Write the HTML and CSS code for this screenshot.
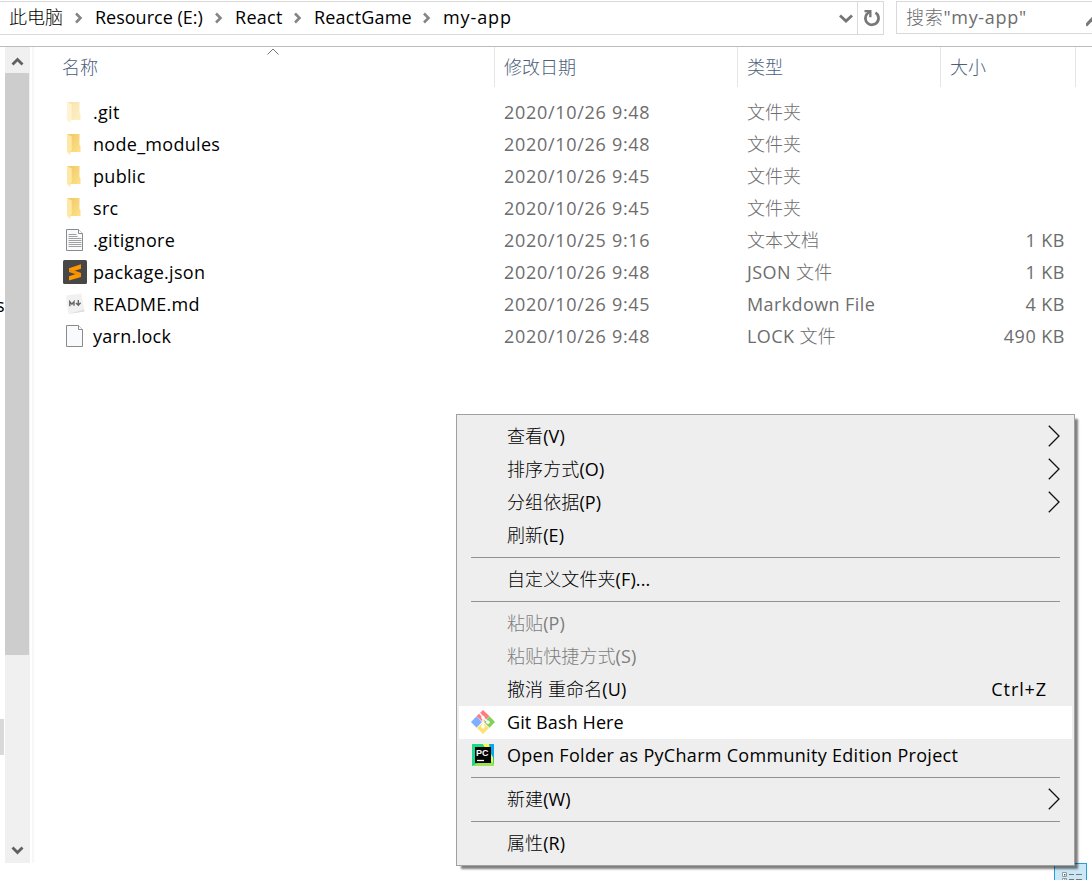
FILE: index.html
```html
<!doctype html>
<html lang="zh-CN">

<head>
  <meta charset="UTF-8" />
  <meta name="viewport" content="width=device-width, initial-scale=1.0" />
  <title>my-app</title>
  <link rel="stylesheet" href="styles.css">
</head>

<body>
  <div class="window">
    <header class="toolbar">
      <div class="address">
        <nav class="crumbs">
          <span class="crumb w-pc">此电脑</span>
          <svg class="crumb-arrow" viewBox="0 0 8 12"><path d="M1 1.5 5.5 6 1 10.5" /></svg>
          <span class="crumb w-drive">Resource (E:)</span>
          <svg class="crumb-arrow" viewBox="0 0 8 12"><path d="M1 1.5 5.5 6 1 10.5" /></svg>
          <span class="crumb w-react">React</span>
          <svg class="crumb-arrow" viewBox="0 0 8 12"><path d="M1 1.5 5.5 6 1 10.5" /></svg>
          <span class="crumb w-game">ReactGame</span>
          <svg class="crumb-arrow" viewBox="0 0 8 12"><path d="M1 1.5 5.5 6 1 10.5" /></svg>
          <span class="crumb current">my-app</span>
        </nav>
        <svg class="address-drop" viewBox="0 0 14 9"><path d="M1 1.5 7 7 13 1.5" /></svg>
        <button class="refresh" type="button">
          <svg viewBox="0 0 18 18"><path d="M12.5 3.6A6.600 6.600 0 1 1 4.200 4.600" /><path class="solid" d="M1.500 1H8.500v7.200H6.200V4.600L4.200 6.600 2.500 5 4.200 3.300H1.500z" /></svg>
        </button>
      </div>
      <div class="search">
        <span class="search-text">搜索"my-app"</span>
        <svg class="search-icon" viewBox="0 0 6 18"><path d="M0 16.500 7 9" /></svg>
      </div>
    </header>

    <main class="content">
      <aside class="tree"><span class="tree-text">s</span><span class="tree-item"></span></aside>
      <div class="scrollbar">
        <svg class="scroll-arrow" viewBox="0 0 25 26"><path d="M7.500 17.500 12.500 12.500 17.500 17.500" /></svg>
        <div class="thumb"></div>
        <svg class="scroll-arrow scroll-down" viewBox="0 0 25 26"><path d="M7.500 10.500 12.500 15.500 17.500 10.500" /></svg>
      </div>
      <div class="splitter"></div>

      <section class="files">
        <div class="row head">
          <span class="name">名称<svg class="sort" viewBox="0 0 12 7"><path d="M.5 6.500 6 1 11.500 6.500" /></svg></span>
          <span>修改日期</span><span>类型</span><span>大小</span>
        </div>
        <div class="row">
          <span class="name"><svg class="icon hidden-folder" viewBox="0 0 24 24"><use href="#folder" /></svg>.git</span>
          <span class="date">2020/10/26 9:48</span><span class="type">文件夹</span><span class="size"></span>
        </div>
        <div class="row">
          <span class="name"><svg class="icon" viewBox="0 0 24 24"><use href="#folder" /></svg>node_modules</span>
          <span class="date">2020/10/26 9:48</span><span class="type">文件夹</span><span class="size"></span>
        </div>
        <div class="row">
          <span class="name"><svg class="icon" viewBox="0 0 24 24"><use href="#folder" /></svg>public</span>
          <span class="date">2020/10/26 9:45</span><span class="type">文件夹</span><span class="size"></span>
        </div>
        <div class="row">
          <span class="name"><svg class="icon" viewBox="0 0 24 24"><use href="#folder" /></svg>src</span>
          <span class="date">2020/10/26 9:45</span><span class="type">文件夹</span><span class="size"></span>
        </div>
        <div class="row">
          <span class="name"><svg class="icon" viewBox="0 0 24 24"><use href="#page" /><path d="M5.500 6.500h8M5.500 8.500h9M5.500 10.500h13M5.500 12.500h13M5.500 14.500h13M5.500 16.500h13M5.500 18.500h13" stroke="#a0a0a0" /></svg>.gitignore</span>
          <span class="date">2020/10/25 9:16</span><span class="type">文本文档</span><span class="size">1 KB</span>
        </div>
        <div class="row">
          <span class="name"><svg class="icon" viewBox="0 0 24 24"><rect width="24" height="24" rx="1.500" fill="#474747" /><path d="M6 8.300 18 4.300v4.400l-6.600 2.100L18 12.900v4L6 20.500v-4.200l6.800-2.200L6 12z" fill="#ff9800" /><path d="M6 12V8.300l12 4.600v4z" fill="#f08a00" opacity=".45" /></svg>package.json</span>
          <span class="date">2020/10/26 9:48</span><span class="type latin">JSON 文件</span><span class="size">1 KB</span>
        </div>
        <div class="row">
          <span class="name"><svg class="icon" viewBox="0 0 24 24"><path d="M3 3.500 18.500 1.500 21.500 19.500 5.500 22z" fill="#f1f1f1" /><path d="M5.500 22 21.500 19.500l-.3-2z" fill="#dedede" /><path d="M6.800 14.200V9.700l2.100 2.400 2.100-2.400v4.100M15.300 8v5M13 11l2.300 2.300 2.300-2.500" fill="none" stroke="#666" stroke-width="1.400" /></svg>README.md</span>
          <span class="date">2020/10/26 9:45</span><span class="type latin">Markdown File</span><span class="size">4 KB</span>
        </div>
        <div class="row">
          <span class="name"><svg class="icon" viewBox="0 0 24 24"><use href="#page" /></svg>yarn.lock</span>
          <span class="date">2020/10/26 9:48</span><span class="type latin">LOCK 文件</span><span class="size">490 KB</span>
        </div>
      </section>
    </main>

    <div class="view-toggle">
      <svg viewBox="0 0 31 17"><path d="M7.500 8.500h4v4h-4zM7.500 14.500h4v4h-4z" fill="#fff" stroke="#999" /><path d="M9 10h1.500v1.500H9zM9 15.500h1.500V17H9z" fill="#386e78" /><path d="M14 10.500h5M21 10.500h6M14 15.500h5M21 15.500h6" stroke="#777" /></svg>
    </div>

    <div class="menu">
      <div class="item">查看(V)<svg class="more" viewBox="0 0 12 22"><path d="M.8.800 11 11 .8 21.200" /></svg></div>
      <div class="item">排序方式(O)<svg class="more" viewBox="0 0 12 22"><path d="M.8.800 11 11 .8 21.200" /></svg></div>
      <div class="item">分组依据(P)<svg class="more" viewBox="0 0 12 22"><path d="M.8.800 11 11 .8 21.200" /></svg></div>
      <div class="item">刷新(E)</div>
      <hr class="line" />
      <div class="item">自定义文件夹(F)...</div>
      <hr class="line" />
      <div class="item disabled">粘贴(P)</div>
      <div class="item disabled">粘贴快捷方式(S)</div>
      <div class="item">撤消 重命名(U)<span class="shortcut">Ctrl+Z</span></div>
      <div class="item active">
        <svg class="item-icon" viewBox="0 0 24 24">
          <path d="M12 0 18.500 6.300 12 12 5.500 6.300z" fill="#ff7b80" />
          <path d="M0 12 5.500 6.300 11 12 5.500 17.700z" fill="#7fb0ff" />
          <path d="M18.500 6.300 24 12l-5.500 5.700L13 12z" fill="#80d25b" />
          <path d="M12 12.500l6 5.500-6 6-6-6z" fill="#ffe070" />
          <path d="M8 2.500 12 7v10M12 7.500l5 4.500" fill="none" stroke="#fff" stroke-width="1.500" />
          <circle cx="12" cy="7.500" r="1.700" fill="#fff" /><circle cx="12" cy="16.500" r="1.900" fill="#fff" /><circle cx="17" cy="12.300" r="1.700" fill="#fff" />
        </svg>Git Bash Here
      </div>
      <div class="item project">
        <svg class="item-icon" viewBox="0 0 24 24">
          <path d="M1 1h22v22H1z" fill="#21d789" />
          <path d="M12 1h7l3 6v16H8l10-9z" fill="#fcf84a" />
          <path d="M18 1h5v15l-3-5z" fill="#07a9e8" />
          <path d="M1 23 11 18h9l3 3v2z" fill="#9de354" />
          <path d="M4 4h16v16H4z" fill="#050505" />
          <path d="M6 17.500h7" stroke="#fff" stroke-width="1.300" />
          <text class="pc" x="5" y="12.800">PC</text>
        </svg>Open Folder as PyCharm Community Edition Project
      </div>
      <hr class="line" />
      <div class="item">新建(W)<svg class="more" viewBox="0 0 12 22"><path d="M.8.800 11 11 .8 21.200" /></svg></div>
      <hr class="line" />
      <div class="item">属性(R)</div>
    </div>
  </div>

  <!-- shared icon shapes -->
  <svg class="defs" width="0" height="0">
    <defs>
      <linearGradient id="back" x1="0" x2="1" y1="0" y2="1">
        <stop offset="0" stop-color="#edc864" />
        <stop offset="1" stop-color="#ffe08a" />
      </linearGradient>
      <g id="folder">
        <path d="M4 2h12.500v11l1 1v6H4z" fill="url(#back)" />
        <path d="M4 2 8.700 4.500V19l-1.200.5V23L4 20z" fill="#ffe8a4" />
      </g>
      <g id="page">
        <path d="M3.500 1.500h12l4 4v17h-16z" fill="#f9fafb" stroke="#8b8b8b" />
        <path d="M15.500 1.500v4h4" fill="#fff" stroke="#8b8b8b" />
      </g>
    </defs>
  </svg>
</body>

</html>
```
FILE: styles.css
```css
* {
  margin: 0;
  padding: 0;
  box-sizing: border-box;
}

body {
  font-family: 'Open Sans', 'Noto Sans CJK SC Light', 'Noto Sans CJK SC DemiLight', 'Noto Sans CJK SC', sans-serif;
  font-size: 18px;
  line-height: 24px;
  color: #000;
  background-color: #fff;
  overflow: hidden;
}

svg {
  display: block;
  flex: none;
}

svg path {
  stroke-linejoin: miter;
}

.window {
  position: relative;
  width: 1092px;
  height: 880px;
  overflow: hidden;
  white-space: nowrap;
}

.toolbar {
  display: flex;
  gap: 12px;
  height: 47px;
  padding-top: 1px;
  border-bottom: 1px solid #bcbcbc;
}

.address {
  display: flex;
  align-items: center;
  width: 884px;
  height: 34px;
  border: 1px solid #d9d9d9;
  border-left: none;
}

.crumbs {
  display: flex;
  align-items: center;
  flex: 1;
  padding-left: 9px;
}

.crumb {
  padding-bottom: 2px;
}

.crumb-arrow {
  width: 8px;
  height: 12px;
  margin: 0 12px 0 11px;
  fill: none;
  stroke: #858585;
  stroke-width: 2.6;
}

.w-pc {
  width: 55px;
}

.w-drive {
  width: 109px;
}

.w-react {
  width: 48px;
  letter-spacing: 0.3px;
}

.w-game {
  width: 98px;
  letter-spacing: 0.2px;
}

.current {
  letter-spacing: 0.9px;
}

.address-drop {
  width: 14px;
  height: 9px;
  margin-right: 4px;
  fill: none;
  stroke: #757575;
  stroke-width: 2.8;
}

.refresh {
  display: flex;
  align-items: center;
  justify-content: center;
  width: 26px;
  height: 32px;
  border: none;
  border-left: 1px solid #d9d9d9;
  background: none;
}

.refresh svg {
  width: 18px;
  height: 18px;
  margin-left: 2px;
  fill: none;
  stroke: #777;
  stroke-width: 2.8;
}

.refresh .solid {
  fill: #777;
  stroke: none;
}

.search {
  display: flex;
  align-items: center;
  justify-content: space-between;
  flex: 1;
  height: 33px;
  padding-left: 9px;
  border: 1px solid #d9d9d9;
  border-right: none;
  color: #6d6d6d;
}

.search-text {
  padding-bottom: 2px;
  letter-spacing: 0.7px;
}

.search-icon {
  width: 6px;
  height: 18px;
  fill: none;
  stroke: #777;
  stroke-width: 3;
}

.content {
  display: flex;
  height: 816px;
}

.tree {
  display: flex;
  flex-direction: column;
  width: 5px;
  padding-top: 246px;
  overflow: hidden;
}

.tree-text {
  width: 5px;
  margin-left: -4px;
}

.tree-item {
  width: 4px;
  height: 36px;
  margin-top: 402px;
  background-color: #d9d9d9;
}

.scrollbar {
  display: flex;
  flex-direction: column;
  width: 25px;
  background-color: #f0f0f0;
}

.scroll-arrow {
  width: 25px;
  height: 26px;
  fill: none;
  stroke: #606060;
  stroke-width: 2.8;
}

.thumb {
  width: 24px;
  height: 582px;
  background-color: #cdcdcd;
}

.scroll-down {
  margin-top: auto;
}

.splitter {
  width: 2px;
  margin-left: 2px;
  background-color: #f7f7f7;
}

.files {
  flex: 1;
}

.row {
  display: grid;
  grid-template-columns: 461px 243px 203px 135px;
  align-items: center;
  height: 32px;
  color: #6d6d6d;
}

.row > span {
  padding-left: 9px;
}

.head {
  height: 40px;
  margin-bottom: 9px;
  color: #4c607a;
}

.head > span {
  height: 40px;
  line-height: 40px;
  border-right: 1px solid #e5e5e5;
}

.row > .name {
  position: relative;
  display: flex;
  align-items: center;
  padding-left: 29px;
  color: #000;
  letter-spacing: 0.3px;
}

.head > .name {
  padding-left: 28px;
  color: #4c607a;
  letter-spacing: 0;
}

.date {
  letter-spacing: 0.7px;
}

.type.latin {
  letter-spacing: 0.4px;
}

.sort {
  position: absolute;
  top: 1px;
  left: 233px;
  width: 12px;
  height: 7px;
  fill: none;
  stroke: #777;
}

.icon {
  width: 24px;
  height: 24px;
  margin-right: 6px;
}

.hidden-folder {
  opacity: 0.5;
}

.row > .size {
  padding-right: 11px;
  text-align: right;
  letter-spacing: 0.5px;
}

/* context menu floats over the file list */
.menu {
  position: absolute;
  top: 414px;
  left: 456px;
  width: 619px;
  height: 452px;
  padding: 5px 2px;
  background-color: #eee;
  border: 1px solid #a0a0a0;
  box-shadow: 4px 4px 2px -1px rgba(0, 0, 0, 0.5);
}

.item {
  display: flex;
  align-items: center;
  height: 33px;
  padding: 0 12px 2px 48px;
  letter-spacing: 0.1px;
}

.project {
  letter-spacing: 0.3px;
}

.disabled {
  color: #7d7d7d;
}

.active {
  background-color: #fff;
}

.more {
  width: 12px;
  height: 22px;
  margin-left: auto;
  fill: none;
  stroke: #111;
  stroke-width: 1.3;
}

.shortcut {
  margin-left: auto;
  margin-right: 13px;
  letter-spacing: 0.9px;
}

.item-icon {
  width: 24px;
  height: 24px;
  margin: 0 12px 0 -36px;
}

.pc {
  font-family: 'Liberation Sans', sans-serif;
  font-size: 9px;
  font-weight: 700;
  letter-spacing: 0;
  fill: #fff;
}

.line {
  height: 1px;
  margin: 5px 12px;
  border: none;
  background-color: #919191;
}

.view-toggle {
  position: absolute;
  top: 863px;
  left: 1054px;
  width: 33px;
  height: 18px;
  border: 1px solid #26a0da;
  background-color: #cce8f6;
}

.view-toggle svg {
  width: 31px;
  height: 17px;
}

.defs {
  position: absolute;
}
```
